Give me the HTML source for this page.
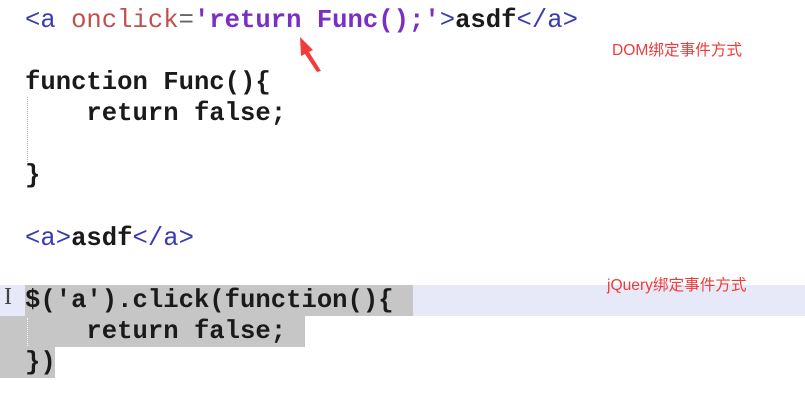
<!DOCTYPE html>
<html><head><meta charset="utf-8"><style>
body{margin:0;width:805px;height:401px;background:#fff;position:relative;overflow:hidden;font-family:"Liberation Mono","Courier New",monospace;}
.l{position:absolute;left:25px;height:31px;line-height:31px;font-size:25.6px;white-space:pre;font-weight:bold;color:#1a1a1a;}
.t{color:#3b3bb0;font-weight:normal}
.at{color:#c0504d;font-weight:normal}
.eq{color:#666;font-weight:normal}
.s{color:#7a2fc4}
.n{position:absolute;font-family:"Liberation Sans","Noto Sans CJK SC",sans-serif;font-size:15.6px;color:#f03a3a;}
.g{position:absolute;background:#c6c6c6}
.dot{position:absolute;border-left:1px dotted #aaa;width:0}
</style></head><body>
<div style="position:absolute;left:0;top:285px;width:805px;height:31px;background:#e7e9f8"></div>
<div class="g" style="left:25px;top:285px;width:388px;height:31px"></div>
<div class="g" style="left:0;top:316px;width:305px;height:31px"></div>
<div class="g" style="left:0;top:347px;width:55px;height:31px"></div>
<div class="dot" style="left:27px;top:97px;height:65px"></div>
<div class="dot" style="left:27px;top:318px;height:28px;border-color:#fff"></div>

<div class="l" style="top:5px"><span class="t">&lt;a</span> <span class="at">onclick</span><span class="eq">=</span><span class="s">'return Func();'</span><span class="t">&gt;</span>asdf<span class="t">&lt;/a&gt;</span></div>
<div class="l" style="top:67px">function Func(){</div>
<div class="l" style="top:98px">    return false;</div>
<div class="l" style="top:160px">}</div>
<div class="l" style="top:223px"><span class="t">&lt;a&gt;</span>asdf<span class="t">&lt;/a&gt;</span></div>
<div class="l" style="top:285px">$('a').click(function(){</div>
<div class="l" style="top:316px">    return false;</div>
<div class="l" style="top:347px">})</div>

<div style="position:absolute;left:4px;top:284px;font-family:'Liberation Serif',serif;font-size:24px;color:#444">I</div>

<svg style="position:absolute;left:0;top:0" width="805" height="401">
<polygon points="300,37 313,50 309,52 321,71 317,72 305,54 301,56" fill="#f23c3c"/>
</svg>
<div class="n" style="left:612px;top:38px">DOM绑定事件方式</div>
<div class="n" style="left:607px;top:273px">jQuery绑定事件方式</div>
</body></html>
